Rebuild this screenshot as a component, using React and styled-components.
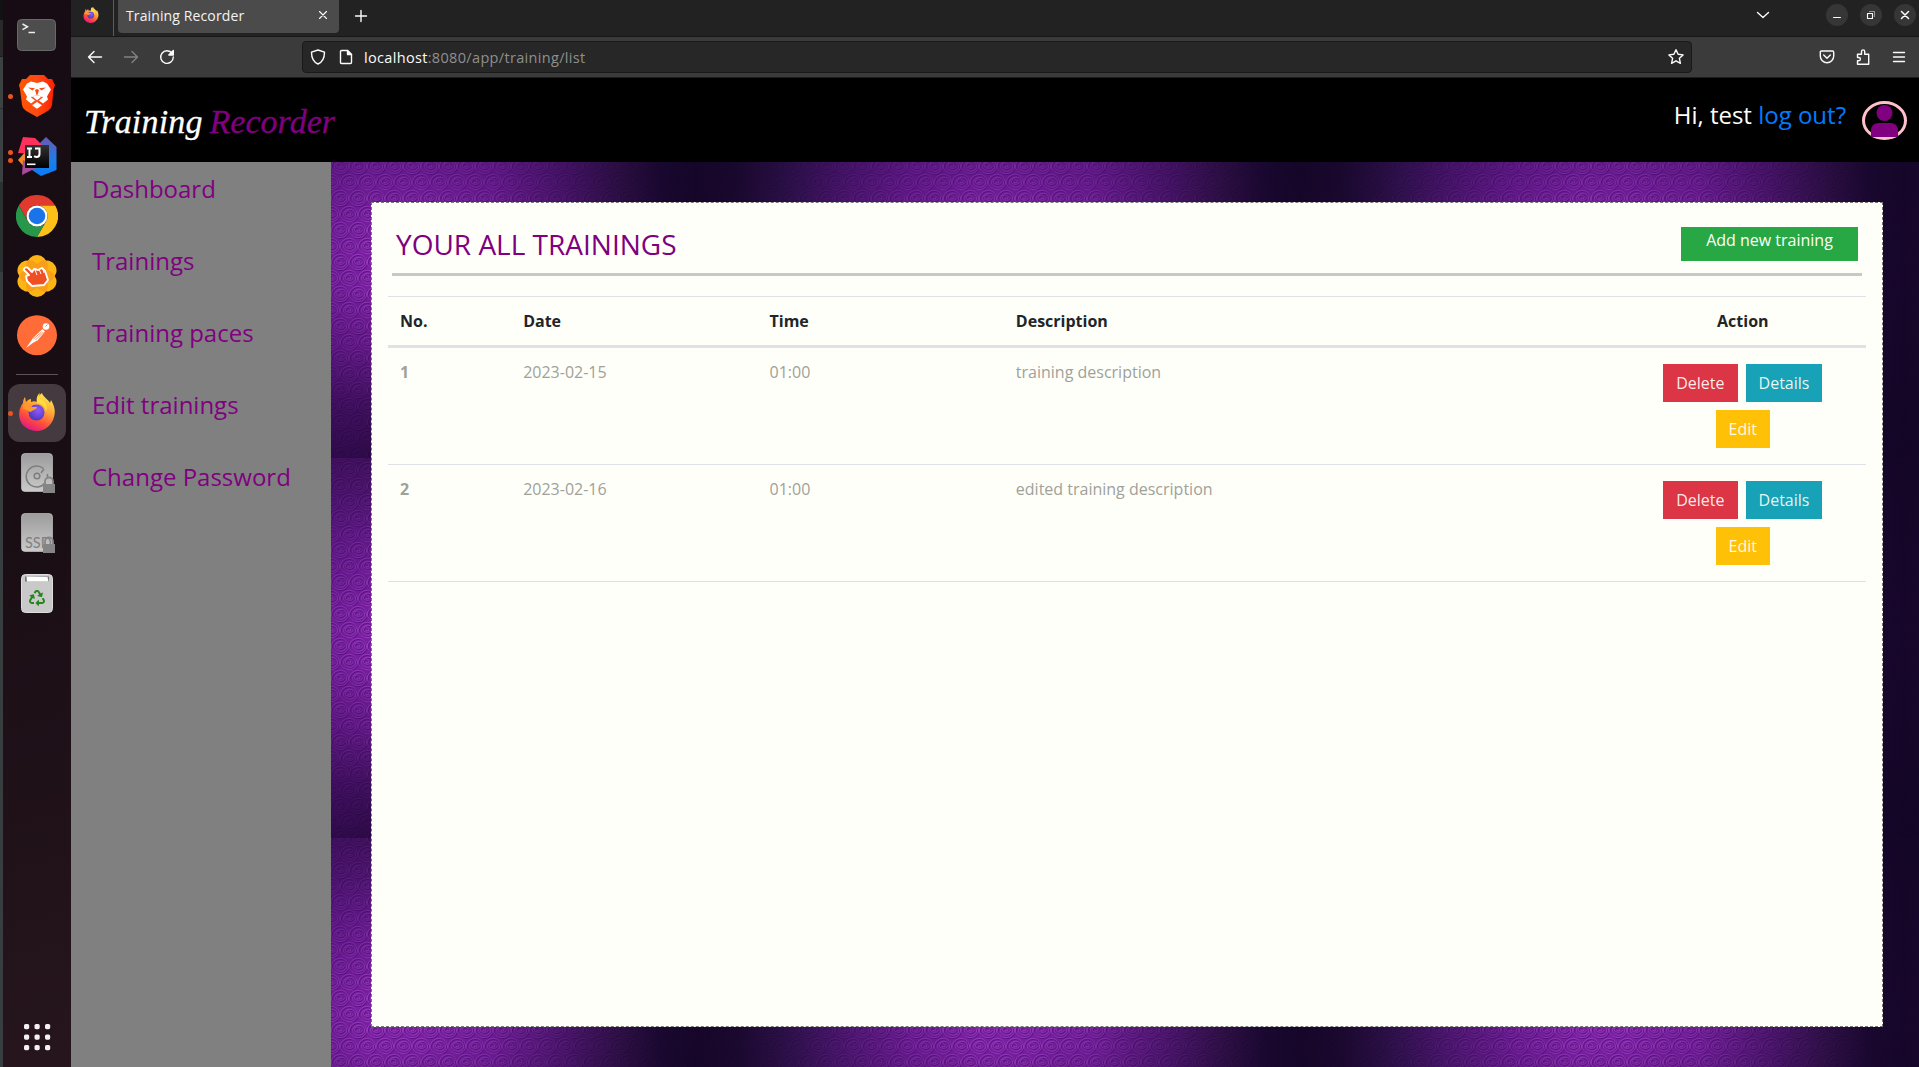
import React from 'react';
import styled, { createGlobalStyle } from 'styled-components';
import { FaRecycle } from 'react-icons/fa';

const GlobalStyle = createGlobalStyle`
  *, *::before, *::after { box-sizing: border-box; }
  html, body, #root { height: 100%; }
  body { margin: 0; overflow: hidden; background: #000; font-family: "Open Sans", "Noto Sans", sans-serif; }
  svg { display: block; }
`;

const ring = (x, y) =>
  `<g transform='translate(${x} ${y})'><ellipse rx='8.6' ry='7.6'/><ellipse cx='.7' cy='.3' rx='6' ry='5'/><path d='M4 0C4 3-3.5 3.5-3.5-.5C-3.5-4 2-4 2-.5C2 1.5-1 1.5-1 0'/></g>`;
const rings = [[9, 8], [27, 8], [0, 24], [18, 24], [36, 24]].map(([x, y]) => ring(x, y)).join('');
const swirl = `<svg xmlns='http://www.w3.org/2000/svg' width='36' height='32'><g fill='none' stroke='#4a0673' stroke-opacity='.6' transform='translate(.9 1)'>${rings}</g><g fill='none' stroke='#b860d6' stroke-opacity='.5' stroke-width='.9'>${rings}</g></svg>`;
const swirlUrl = `url("data:image/svg+xml,${encodeURIComponent(swirl)}")`;

/* ---------- desktop ---------- */
const Desktop = styled.div`
  display: grid;
  grid-template-columns: 3px 68px minmax(0, 1fr);
  width: 100vw;
  height: 100vh;
`;
const DeskEdge = styled.div`
  background: linear-gradient(#101213 0 20px, #292929 20px 56px, #1d1d1d 56px 57px, #3c4142 57px 108px, #292d2e 108px 109px, #3b4142 109px 182px, #2b3031 182px 272px, #383e3f 272px);
`;
const Dock = styled.nav`
  display: flex;
  flex-direction: column;
  align-items: center;
  padding-top: 6px;
  background: linear-gradient(165deg, #170c13 0%, #1a0e15 50%, #26151d 100%);
`;
const DockItem = styled.div`
  position: relative;
  display: grid;
  place-items: center;
  width: 68px;
  height: 60px;
  flex: none;
  ${(p) => p.$last && 'margin-top: auto;'}
`;
const ActiveTile = styled.div`
  display: grid;
  place-items: center;
  width: 58px;
  height: 58px;
  padding-bottom: 2px;
  border-radius: 12px;
  background: #453a40;
`;
const RunDots = styled.div`
  position: absolute;
  left: 5px;
  top: 0;
  height: 60px;
  display: flex;
  flex-direction: column;
  justify-content: center;
  gap: 3px;
`;
const RunDot = styled.i`
  width: 5px;
  height: 5px;
  border-radius: 50%;
  background: #e95420;
`;
const DockRule = styled.div`
  width: 42px;
  height: 17px;
  flex: none;
  background: linear-gradient(#5b5358, #5b5358) 0 8px / 42px 1px no-repeat;
`;
const IconStack = styled.div`
  display: grid;
  place-items: center;
  & > * { grid-area: 1 / 1; }
`;
const RecycleMark = styled(FaRecycle)`
  margin-top: 10px;
  color: #26851d;
`;

/* ---------- browser ---------- */
const Browser = styled.div`
  display: grid;
  grid-template-rows: 37px 41px minmax(0, 1fr);
  min-width: 0;
`;
const TabBar = styled.div`
  display: flex;
  align-items: flex-start;
  background: #222;
  border-bottom: 1px solid #171717;
`;
const PinnedTab = styled.div`
  width: 43px;
  height: 36px;
  padding: 7px 0 0 12px;
  border-right: 1px solid #5c5c5c;
`;
const Tab = styled.div`
  display: flex;
  align-items: center;
  justify-content: space-between;
  width: 221px;
  height: 33px;
  margin-left: 4px;
  padding: 0 10px 3px 8px;
  border-radius: 0 0 4px 4px;
  background: #4b4b4b;
  color: #f3f3f3;
  font-size: 14px;
  letter-spacing: 0.12px;
`;
const NewTab = styled.div`
  padding: 9px 0 0 15px;
`;
const WindowControls = styled.div`
  display: flex;
  align-items: center;
  gap: 12px;
  margin-left: auto;
  padding: 4px 3px 0 0;
`;
const ListTabs = styled.div`
  margin-right: 44px;
`;
const RoundButton = styled.div`
  display: grid;
  place-items: center;
  width: 22px;
  height: 22px;
  border-radius: 50%;
  background: #363636;
`;
const Toolbar = styled.div`
  display: flex;
  align-items: center;
  padding: 0 11px 0 15px;
  background: #3b3b3b;
  border-bottom: 1px solid #1d1d1d;
`;
const NavButtons = styled.div`
  display: flex;
  gap: 18px;
  width: 216px;
`;
const AddressBar = styled.div`
  display: flex;
  align-items: center;
  width: 1390px;
  height: 32px;
  padding: 0 6px 0 7px;
  border: 1px solid #191919;
  border-radius: 4px;
  background: #272727;
  color: #8f8f8f;
  font-size: 14.5px;
  letter-spacing: 0.33px;
`;
const PageIcon = styled.span`
  margin-left: 12px;
`;
const Url = styled.span`
  margin-left: 10px;
  flex: 1;
  b { font-weight: 400; color: #fbfbfb; }
`;
const ToolIcons = styled.div`
  display: flex;
  gap: 18px;
  margin-left: auto;
`;

/* ---------- page ---------- */
const Page = styled.div`
  display: grid;
  grid-template-rows: 84px minmax(0, 1fr);
  grid-template-columns: 260px minmax(0, 1fr);
`;
const Header = styled.header`
  grid-column: 1 / -1;
  display: flex;
  justify-content: space-between;
  padding: 0 12px 0 13px;
  background: #000;
`;
const Logo = styled.div`
  padding-top: 23px;
  font: italic 400 34px/42px "Liberation Serif", serif;
  letter-spacing: 0.2px;
  white-space: nowrap;
  color: #fff;
  -webkit-text-stroke: 0.3px;
  span { color: purple; margin-left: -2px; letter-spacing: 0.05px; }
`;
const UserArea = styled.div`
  display: flex;
  gap: 16px;
  padding-top: 19px;
  font-size: 24px;
  line-height: 36px;
  color: #fefff9;
  span { color: #007bff; }
`;
const Avatar = styled.div`
  width: 45px;
  height: 39px;
  margin-top: 4px;
`;
const Sidebar = styled.aside`
  display: flex;
  flex-direction: column;
  gap: 36px;
  padding: 9px 20px 9px 21px;
  background: #808080;
`;
const SideLink = styled.a`
  font-size: 24px;
  line-height: 36px;
  color: purple;
`;
const Content = styled.main`
  display: grid;
  padding: 40px 36px 40px 40px;
  background-color: #7d1fa5;
  background-image:
    linear-gradient(90deg, #120524f5 0, #150728f0 7%, #1e0c38d8 15%, #2b0c4aa0 24%, #3a0a6050 35%, #5a128000 46%, #5a128000 54%, #3d0c6038 66%, #2b0b48a0 78%, #1c0a30d0 87%, #140629f0 94%, #120524f5 100%),
    linear-gradient(#1e0635a8 0, #26084490 10%, #3a0a6058 24%, #4a107018 38%, #4a107000 46%, #4a107010 55%, #35085560 70%, #22063cb0 86%, #1e0535d8 100%),
    ${swirlUrl};
  background-size: 604px 380px, 604px 380px, 36px 32px;
  background-position: -238px -84px, -238px -84px, 0 -4px;
`;
const Card = styled.section`
  padding: 23px 16px 24px;
  border: 1px dashed #777;
  background: #fefff9;
`;
const CardHead = styled.div`
  display: flex;
  justify-content: space-between;
  height: 50px;
  margin: 0 4px 20px;
  padding: 0 4px;
  border-bottom: 3px solid #c8c8cb;
`;
const Title = styled.h1`
  margin: 0;
  font-size: 28px;
  font-weight: 400;
  line-height: 36px;
  color: purple;
`;
const AddButton = styled.button`
  width: 177px;
  height: 34px;
  margin-top: 1px;
  padding: 0 0 8px;
  border: 0;
  background: #28a745;
  color: #fefff9;
  font: 16px/24px "Open Sans", sans-serif;
`;
const Row = styled.div`
  display: grid;
  grid-template-columns: 1fr 2fr 2fr 5fr 2fr;
  font-size: 16px;
  line-height: 24px;
  color: #a0a199;
  border-bottom: 1px solid #dee2e6;
  ${(p) =>
    p.$head &&
    'color: #212529; font-weight: 700; border-top: 1px solid #dee2e6; border-bottom: 3px solid #dee2e6;'}
`;
const Cell = styled.div`
  padding: 12px;
  font-weight: ${(p) => (p.$bold ? 700 : 'inherit')};
  text-align: ${(p) => (p.$center ? 'center' : 'left')};
`;
const Actions = styled.div`
  display: flex;
  flex-wrap: wrap;
  justify-content: center;
  gap: 8px;
  padding: 12px 38px;
  padding-block: 16px;
`;
const ActionButton = styled.button`
  height: 38px;
  padding: 0 13px;
  border: 0;
  background: ${(p) => p.$color};
  color: #fefff9e8;
  font: 16px/24px "Open Sans", sans-serif;
`;

/* ---------- icons ---------- */
const Line = ({ w = 16, h = 16, color = '#fbfbfe', sw = 1.4, children }) => (
  <svg width={w} height={h} viewBox={`0 0 ${w} ${h}`} fill="none" stroke={color} strokeWidth={sw} strokeLinecap="round" strokeLinejoin="round">
    {children}
  </svg>
);

const Firefox = ({ size, id }) => (
  <svg width={size} height={size} viewBox="0 0 36 38">
    <defs>
      <linearGradient id={id} x1=".8" y1="0" x2=".3" y2="1">
        <stop offset="0" stopColor="#fff44f" />
        <stop offset=".4" stopColor="#ffa436" />
        <stop offset=".7" stopColor="#ff4f3a" />
        <stop offset="1" stopColor="#e31587" />
      </linearGradient>
      <radialGradient id={id + 'g'} cx=".6" cy=".35" r=".7">
        <stop offset="0" stopColor="#9059ff" />
        <stop offset="1" stopColor="#4a36b8" />
      </radialGradient>
    </defs>
    <path d="M23 0c1 4 6 6 8 10l1-3c3 5 5 11 3 17-2 8-9 14-17 14S2 33 .5 25C-.5 19 1 14 4 10c0-2 .5-4 2-6l1 5c2-2 3-3 5-3l0 3c2-1 4-1 6 0 0-4 2-7 5-9z" fill={`url(#${id})`} />
    <circle cx="17.5" cy="19.5" r="8" fill={`url(#${id}g)`} />
    <path d="M18 10c5 0 9 4 9 9 2-5 0-10-5-13-2-1-2-4-1-6-3 2-4 6-3 10z" fill="#ffdc3e" />
    <path d="M4 12c3-2 7-2 9 2h5c0 3-5 3-6 5-3 0-3-3-8-3z" fill="#ff9a2a" />
  </svg>
);

const Terminal = () => (
  <svg width="40" height="35" viewBox="0 0 40 35">
    <rect x=".5" y=".5" width="38" height="31" rx="4" fill="#4d4d4d" stroke="#686868" />
    <path d="M5.500 5l5 2.800-5 2.800M11.500 13.500H18" fill="none" stroke="#eee" strokeWidth="1.500" />
  </svg>
);

const Brave = () => (
  <svg width="36" height="42" viewBox="0 0 36 42">
    <defs>
      <linearGradient id="brv">
        <stop stopColor="#ff5500" />
        <stop offset=".5" stopColor="#ff4a12" />
        <stop offset="1" stopColor="#fb2000" />
      </linearGradient>
    </defs>
    <path d="M11 0h14l4 4 4 0 3 6-1.500 4L33 30c-1 4-3 5-6 7l-9 5-9-5c-3-2-5-3-6-7L1 14 0 10l3-6 4 0z" fill="url(#brv)" />
    <path d="M12 6.500l6 1.500 6-1.500 4 2 4 6-4 7 1 3-5 4-4-3 2-4-3.500-1.500 1.500-5-2-1-2 1 1.500 5L14 21.500l2 4-4 3-5-4 1-3-4-7 4-6z" fill="#fff" />
    <path d="M9 12.500l7 .8-2.500 2.200zM27 12.500l-7 .8 2.500 2.200z" fill="#ff4a12" />
    <path d="M14 21.500l4-1.500 4 1.500-2.500 4 -1.500 1-1.500-1z" fill="#fff" />
    <path d="M12.500 22l5.500 4 5.500-4" fill="none" stroke="#ff4212" strokeWidth="1.300" />
    <path d="M18 27l5 3.300-5 3.500-5-3.500z" fill="#fff" />
  </svg>
);

const IntelliJ = () => (
  <svg width="39" height="39" viewBox="0 0 39 39">
    <defs>
      <linearGradient id="ijb" x1="0" y1="0" x2="0" y2="1">
        <stop stopColor="#6b57b8" />
        <stop offset=".6" stopColor="#1a7fe8" />
        <stop offset="1" stopColor="#087cfa" />
      </linearGradient>
      <linearGradient id="ijk" x1="0" y1="0" x2="0" y2="1">
        <stop stopColor="#333" />
        <stop offset="1" stopColor="#000" />
      </linearGradient>
    </defs>
    <path d="M22 6L28 0l10.500 10v23L23 39 14 33z" fill="url(#ijb)" />
    <path d="M8 14L0 23l7 8 6-6z" fill="#f08a2c" />
    <path d="M5 23l-1 15 14-7z" fill="#a84b9e" />
    <path d="M5 0l12 1 8 8-9 8L0 16z" fill="#fe315d" />
    <rect x="7" y="8" width="24" height="23" fill="url(#ijk)" />
    <path d="M9 11.500h5M9 20h5M11.500 11.500v8.500M17 11.500h4.500v5.500q0 3-3 3-1.300 0-2.300-1" fill="none" stroke="#fff" strokeWidth="2" />
    <path d="M9 27.300h8.500" stroke="#fff" strokeWidth="1.600" />
  </svg>
);

const Chrome = () => (
  <svg width="42" height="42" viewBox="-21 -21 42 42">
    <path d="M-18.200-10.500A21 21 0 0 1 18.200-10.500H0A10.500 10.500 0 0 0-9.100 5.250z" fill="#e0392d" />
    <path d="M18.200-10.500A21 21 0 0 1 0 21L9.100 5.250A10.500 10.500 0 0 0 0-10.500z" fill="#fcc018" />
    <path d="M0 21A21 21 0 0 1-18.200-10.500L-9.100 5.250A10.500 10.500 0 0 0 9.100 5.250z" fill="#27974a" />
    <circle r="10.500" fill="#fff" />
    <circle r="8.300" fill="#1a73e8" />
  </svg>
);

const Flower = () => (
  <svg width="42" height="42" viewBox="-21 -21 42 42">
    <g fill="#fdb515">
      {[0, 60, 120, 180, 240, 300].map((a) => (
        <circle key={a} cx="0" cy="-11" r="10" transform={`rotate(${a})`} />
      ))}
      <circle r="12" />
    </g>
    <g fill="#f78f1e" opacity=".6">
      {[0, 60, 120].map((a) => (
        <ellipse key={a} rx="17.500" ry="7.500" transform={`rotate(${a})`} />
      ))}
    </g>
    <path d="M-13-7c1-2 3-2 4-1l4 4 2-3 4 1 4-2 3 3 3 9-4 5-12 1-5-5-1-5 3-1-5-5z" fill="#f04e23" stroke="#fff" strokeWidth="1.900" strokeLinejoin="round" />
    <path d="M-2-6l2 5M2-7l2 5M6-7l1 4" stroke="#fff" strokeWidth="1" />
  </svg>
);

const DiskBody = ({ children }) => (
  <svg width="36" height="42" viewBox="0 0 36 42">
    <defs>
      <linearGradient id="dsk" x1="0" y1="0" x2="0" y2="1">
        <stop stopColor="#9c9c9c" />
        <stop offset="1" stopColor="#cacaca" />
      </linearGradient>
    </defs>
    <rect x="2.500" y="1.500" width="31" height="38" rx="3.500" fill="url(#dsk)" stroke="#d0d0d0" strokeOpacity=".6" />
    {children}
    <path d="M26 33v-3.500a4 4 0 0 1 8 0V33" fill="none" stroke="#858585" strokeWidth="1.800" />
    <rect x="24" y="32" width="12" height="9" fill="#858585" />
  </svg>
);
const HardDisk = () => (
  <DiskBody>
    <path d="M24.500 16.500A10.500 10.500 0 1 0 26 31" fill="none" stroke="#7d7d7d" strokeWidth="1.500" />
    <path d="M25 17l-3 4M28.500 22v4" stroke="#7d7d7d" strokeWidth="1.500" />
    <circle cx="18" cy="24" r="2.800" fill="none" stroke="#7d7d7d" strokeWidth="1.500" />
  </DiskBody>
);
const SolidDisk = () => (
  <DiskBody>
    <text x="6" y="35.500" fontFamily="Lato, sans-serif" fontSize="14.500" fill="#808080">SSD</text>
  </DiskBody>
);
const Trash = () => (
  <IconStack>
    <svg width="34" height="41" viewBox="0 0 34 41">
      <rect x="1.500" y="1.500" width="31" height="38" rx="4" fill="#c9c9c9" stroke="#dedede" />
      <path d="M5 3.500h24v5H5z" fill="#777" />
      <path d="M6.500 3.500l21 .5 1 4.500H7z" fill="#fff" />
    </svg>
    <RecycleMark size={16} />
  </IconStack>
);
const Postman = () => (
  <svg width="40" height="42" viewBox="0 0 40 42">
    <circle cx="20" cy="20.200" r="20" fill="#ff6c37" />
    <circle cx="29" cy="11.500" r="3.300" fill="#fff" />
    <path d="M25.500 14l2.500 2.500-7.500 9-4 2-7.500 5.500 5-7 2-3z" fill="#fff" />
    <path d="M24.500 17l-8 7M26.500 17l-8 8" stroke="#ff6c37" strokeWidth=".8" />
    <path d="M28.500 11.500l2-2" stroke="#ff6c37" strokeWidth=".9" />
  </svg>
);
const AppGrid = () => (
  <svg width="28" height="28" viewBox="0 0 28 28" fill="#f4f1f2">
    {[0, 1, 2].flatMap((r) => [0, 1, 2].map((c) => <rect key={`${r}${c}`} x={1 + c * 10.5} y={1 + r * 10.5} width="5.200" height="5.200" rx="1.600" />))}
  </svg>
);

const dockApps = [
  { icon: <Terminal /> },
  { icon: <Brave />, dots: 1 },
  { icon: <IntelliJ />, dots: 2 },
  { icon: <Chrome /> },
  { icon: <Flower /> },
  { icon: <Postman /> },
];
const links = ['Dashboard', 'Trainings', 'Training paces', 'Edit trainings', 'Change Password'];
const trainings = [
  { no: 1, date: '2023-02-15', time: '01:00', text: 'training description' },
  { no: 2, date: '2023-02-16', time: '01:00', text: 'edited training description' },
];

const Dots = ({ n = 0 }) => <RunDots>{Array.from({ length: n }, (_, i) => <RunDot key={i} />)}</RunDots>;

export default function App() {
  return (
    <Desktop>
      <GlobalStyle />
      <DeskEdge />
      <Dock>
        {dockApps.map((a, i) => (
          <DockItem key={i}>{a.icon}<Dots n={a.dots} /></DockItem>
        ))}
        <DockRule />
        <DockItem><ActiveTile><Firefox size={38} id="ffl" /></ActiveTile><Dots n={1} /></DockItem>
        <DockItem><HardDisk /></DockItem>
        <DockItem><SolidDisk /></DockItem>
        <DockItem><Trash /></DockItem>
        <DockItem $last><AppGrid /></DockItem>
      </Dock>
      <Browser>
        <TabBar>
          <PinnedTab><Firefox size={16} id="ffs" /></PinnedTab>
          <Tab>
            Training Recorder
            <Line w={12} h={12} sw={1.100}><path d="M2.500 2.500l7 7M9.500 2.500l-7 7" /></Line>
          </Tab>
          <NewTab><Line w={14} h={14}><path d="M7 1.500v11M1.500 7h11" /></Line></NewTab>
          <WindowControls>
            <ListTabs><Line w={14} h={8}><path d="M1.500 1.500L7 6.500l5.500-5" /></Line></ListTabs>
            <RoundButton><Line w={10} h={10} sw={1}><path d="M1.500 7.500h7" /></Line></RoundButton>
            <RoundButton><Line w={10} h={10} sw={1.100}><path d="M1.500 3.500h5v5h-5z" /><path d="M3.500 1.500h5v5" opacity=".5" /></Line></RoundButton>
            <RoundButton><Line w={10} h={10} sw={1.500}><path d="M1.500 1.500l7 7M8.500 1.500l-7 7" /></Line></RoundButton>
          </WindowControls>
        </TabBar>
        <Toolbar>
          <NavButtons>
            <Line w={18} h={18}><path d="M15.500 9h-13M8 3.500L2.500 9 8 14.500" /></Line>
            <Line w={18} h={18} color="#828282"><path d="M2.500 9h13M10 3.500L15.500 9 10 14.500" /></Line>
            <Line w={18} h={18}><path d="M14.200 5.500A6.300 6.300 0 1 0 15.300 9" /><path d="M15.300 2.500v4.500h-4.500z" fill="#fbfbfe" /></Line>
          </NavButtons>
          <AddressBar>
            <Line><path d="M8 1L1.500 3.200C1.500 8.500 3.500 13 8 15c4.500-2 6.500-6.500 6.500-11.800z" /></Line>
            <PageIcon><Line><path d="M3.500 1.500h6l4 4v8q0 1-1 1h-9q-1 0-1-1v-11q0-1 1-1z" /><path d="M9.500 1.500v4h4z" fill="#fbfbfe" /></Line></PageIcon>
            <Url><b>localhost</b>:8080/app/training/list</Url>
            <Line w={18} h={18}><path d="M9 1.700l2.100 4.600 5 .6-3.700 3.400 1 5L9 12.800l-4.400 2.500 1-5L1.900 6.900l5-.6z" /></Line>
          </AddressBar>
          <ToolIcons>
            <Line w={18} h={18}><path d="M3.500 3h11q1.200 0 1.200 1.200V8a6.700 6.700 0 0 1-13.400 0V4.200Q2.300 3 3.500 3z" /><path d="M5.700 7L9 10.200 12.300 7" /></Line>
            <Line w={18} h={18}><path d="M3.500 6.200h4V3.500a1.600 1.600 0 0 1 3.200 0v2.700h4v10H3.500v-3.500h1.300a1.600 1.600 0 0 0 0-3.200H3.500z" /></Line>
            <Line w={18} h={18}><path d="M3.500 4.500h11M3.500 9h11M3.500 13.500h11" /></Line>
          </ToolIcons>
        </Toolbar>
        <Page>
          <Header>
            <Logo>Training <span>Recorder</span></Logo>
            <UserArea>
              <div>Hi, test <span>log out?</span></div>
              <Avatar>
                <svg width="45" height="39" viewBox="0 0 45 39">
                  <ellipse cx="22.500" cy="19.500" rx="21" ry="18" fill="#000" stroke="#ffc0cb" strokeWidth="3" />
                  <circle cx="22.500" cy="12" r="8" fill="purple" />
                  <path d="M9 36v-6q0-8 8-8h11q8 0 8 8v6z" fill="purple" />
                  <path d="M10 36.200q12.500 4 25 0z" fill="#ffc0cb" />
                </svg>
              </Avatar>
            </UserArea>
          </Header>
          <Sidebar>{links.map((l) => <SideLink key={l}>{l}</SideLink>)}</Sidebar>
          <Content>
            <Card>
              <CardHead>
                <Title>YOUR ALL TRAININGS</Title>
                <AddButton>Add new training</AddButton>
              </CardHead>
              <Row $head>
                <Cell>No.</Cell><Cell>Date</Cell><Cell>Time</Cell><Cell>Description</Cell><Cell $center>Action</Cell>
              </Row>
              {trainings.map((t) => (
                <Row key={t.no}>
                  <Cell $bold>{t.no}</Cell>
                  <Cell>{t.date}</Cell>
                  <Cell>{t.time}</Cell>
                  <Cell>{t.text}</Cell>
                  <Actions>
                    <ActionButton $color="#dc3545">Delete</ActionButton>
                    <ActionButton $color="#17a2b8">Details</ActionButton>
                    <ActionButton $color="#ffc107">Edit</ActionButton>
                  </Actions>
                </Row>
              ))}
            </Card>
          </Content>
        </Page>
      </Browser>
    </Desktop>
  );
}
